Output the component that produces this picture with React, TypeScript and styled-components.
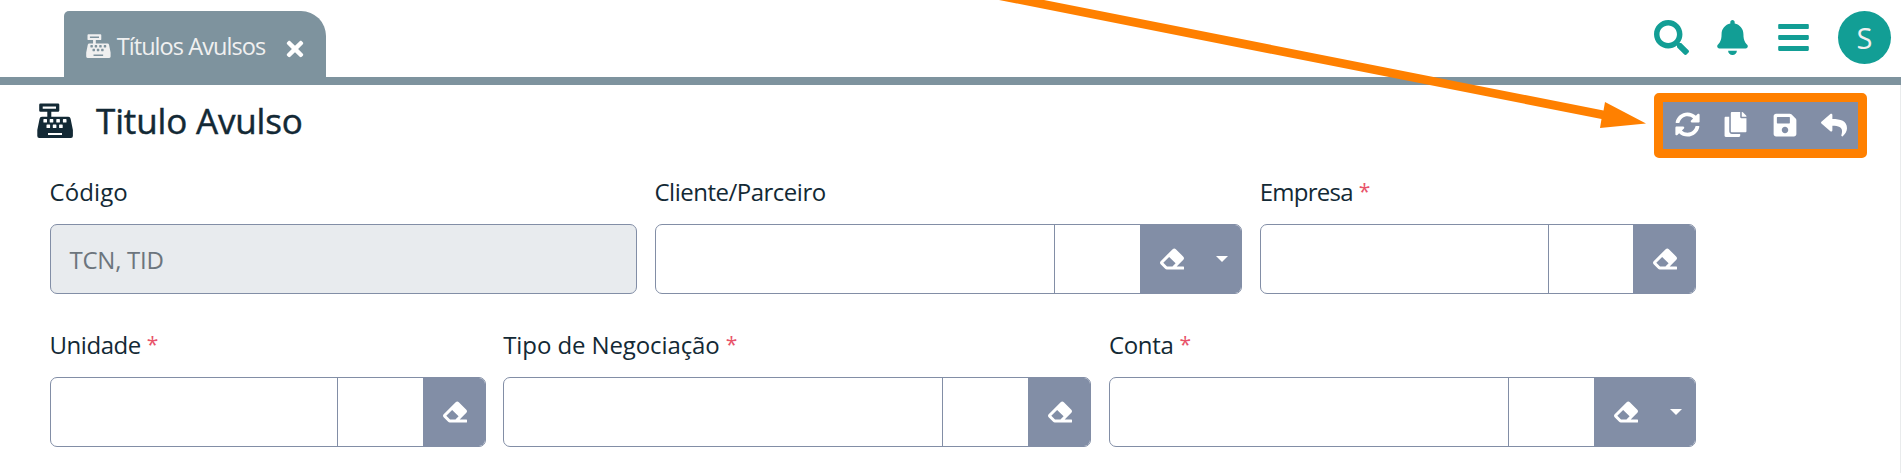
import React from 'react';
import styled, { createGlobalStyle } from 'styled-components';
import {
  FaBars,
  FaBell,
  FaCopy,
  FaEraser,
  FaReply,
  FaSave,
  FaSearch,
  FaSyncAlt,
  FaTimes,
} from 'react-icons/fa';

const GlobalStyle = createGlobalStyle`
  * { box-sizing: border-box; }
  body {
    margin: 0;
    background: #fff;
    overflow: hidden;
    font-family: 'Open Sans', 'Noto Sans', sans-serif;
    color: #132935;
  }
  svg { display: block; flex: none; }
`;

const Page = styled.div`
  position: relative;
  height: 473px;
  display: flex;
  flex-direction: column;
`;

const TopBar = styled.header`
  height: 85px;
  flex: none;
  display: flex;
  justify-content: space-between;
  padding: 11px 10px 0 64px;
  border-bottom: 8px solid #7e939e;
`;

const Tab = styled.div`
  width: 262px;
  height: 66px;
  display: flex;
  align-items: center;
  padding: 4px 22px 0;
  background: #7e939e;
  border-radius: 5px 25px 0 0;
  color: #f0f0f0;
`;

const TabLabel = styled.span`
  width: 148px;
  margin: 0 18px 0 6px;
  font-size: 23.5px;
  line-height: 32px;
  letter-spacing: -0.93px;
  white-space: nowrap;
`;

const CloseIcon = styled(FaTimes)`
  margin-top: 5px;
  color: #fff;
`;

const TopActions = styled.nav`
  display: flex;
  align-items: center;
  height: 53px;
  color: #129e95;
`;

const TopIcon = styled.span<{ $gap: number }>`
  display: flex;
  margin-right: ${({ $gap }) => $gap}px;
`;

const Avatar = styled.span`
  width: 53px;
  height: 53px;
  display: flex;
  align-items: center;
  justify-content: center;
  border-radius: 50%;
  background: #129e95;
  color: #f0f0f0;
  font-size: 29px;
  line-height: 40px;
`;

const Content = styled.main`
  flex: 1;
  border-right: 1px solid #e9ebec;
`;

const Heading = styled.div`
  display: flex;
  justify-content: space-between;
  height: 87px;
  padding: 8px 33px 0 37px;
`;

const TitleGroup = styled.div`
  display: flex;
  gap: 23px;
  padding-top: 10px;
`;

const Title = styled.h1`
  margin: -6px 0 0;
  font-size: 35px;
  line-height: 48px;
  font-weight: 400;
  -webkit-text-stroke: 0.45px currentColor;
  letter-spacing: -0.15px;
  white-space: nowrap;
`;

const Toolbar = styled.div`
  width: 213px;
  height: 65px;
  display: flex;
  align-items: center;
  justify-content: space-between;
  padding: 0 11px 2px 12px;
  border: 9px solid #ff8000;
  border-radius: 5px;
  background: #828ea6;
  color: #fff;
`;

const FormRow = styled.div`
  display: flex;
  gap: 17.75px;
  height: 153px;
  padding-left: 49.5px;
`;

const Field = styled.div<{ $width: number }>`
  width: ${({ $width }) => $width}px;
  flex: none;
`;

const Label = styled.label`
  display: flex;
  height: 52px;
  padding-top: 3px;
  font-size: 24px;
  line-height: 33px;
  white-space: nowrap;
`;

const LabelText = styled.span<{ $spacing: number }>`
  letter-spacing: ${({ $spacing }) => $spacing}px;
`;

const Required = styled.span`
  margin-left: 6px;
  font-size: 21px;
  color: #e8536a;
`;

const Control = styled.div<{ $disabled?: boolean }>`
  display: flex;
  align-items: center;
  height: 70px;
  overflow: hidden;
  border: 1px solid #828ea6;
  border-radius: 7px;
  background: ${({ $disabled }) => ($disabled ? '#e8ebee' : '#fff')};
`;

const Placeholder = styled.span`
  padding-left: 19px;
  font-size: 24px;
  letter-spacing: -0.25px;
  color: #6c757d;
`;

const MainInput = styled.div`
  flex: 1;
  height: 100%;
`;

const CodeInput = styled.div<{ $width: number }>`
  width: ${({ $width }) => $width}px;
  height: 100%;
  border-left: 1px solid #828ea6;
`;

const Buttons = styled.div<{ $menu?: boolean }>`
  width: ${({ $menu }) => ($menu ? 101 : 62)}px;
  height: 100%;
  display: flex;
  align-items: center;
  gap: 32px;
  padding-left: 20px;
  background: #828ea6;
  color: #fff;
`;

const Caret = styled.span`
  border: 6px solid transparent;
  border-top-color: #fff;
  border-bottom: 0;
`;

const ArrowOverlay = styled.svg`
  position: absolute;
  inset: 0;
`;

/* Cash register: display on a neck, two rows of keys and a drawer slot. */
const RegisterIcon = ({ size }: { size: number }) => (
  <svg width={(size * 36) / 35} height={size} viewBox="0 0 36 35" fill="currentColor" fillRule="evenodd">
    <path d="M3.500 0.500h17.500q1.300 0 1.300 1.300v5.700q0 1.300-1.300 1.300h-6.700v4.900h17q2 0 2.300 2l2.300 11.300v6q0 2-2 2h-31.600q-2 0-2-2v-6l2.300-11.300q.3-2 2.300-2h5.400v-4.900h-6.800q-1.300 0-1.300-1.300v-5.700q0-1.300 1.300-1.300zM5.700 3.600v2.200h13.300v-2.200zM7 16h2.400q.6 0 .6.600v2.400q0 .6-.6.600h-2.400q-.6 0-.6-.6v-2.400q0-.6.600-.6zM13.300 16h2.400q.6 0 .6.600v2.400q0 .6-.6.600h-2.400q-.6 0-.6-.6v-2.400q0-.6.600-.6zM19.900 16h2.400q.6 0 .6.600v2.400q0 .6-.6.600h-2.400q-.6 0-.6-.6v-2.400q0-.6.600-.6zM26.500 16h2.400q.6 0 .6.600v2.400q0 .6-.6.600h-2.400q-.6 0-.6-.6v-2.400q0-.6.600-.6zM10.100 21.500h2.400q.6 0 .6.600v2.400q0 .6-.6.600h-2.400q-.6 0-.6-.6v-2.400q0-.6.600-.6zM16.400 21.500h2.400q.6 0 .6.600v2.400q0 .6-.6.600h-2.400q-.6 0-.6-.6v-2.400q0-.6.600-.6zM22.700 21.500h2.400q.6 0 .6.600v2.400q0 .6-.6.600h-2.400q-.6 0-.6-.6v-2.400q0-.6.600-.6zM11 30v2h14v-2z" />
  </svg>
);

interface FieldData {
  label: string;
  width: number;
  spacing: number;
  required?: boolean;
  placeholder?: string;
  menu?: boolean;
  codeWidth?: number;
}

const rows: FieldData[][] = [
  [
    { label: 'Código', width: 587.25, spacing: 0.1, placeholder: 'TCN, TID' },
    { label: 'Cliente/Parceiro', width: 587.5, spacing: -0.5, menu: true },
    { label: 'Empresa', width: 436.25, spacing: -0.75, required: true, codeWidth: 85 },
  ],
  [
    { label: 'Unidade', width: 436, spacing: -0.45, required: true },
    { label: 'Tipo de Negociação', width: 588, spacing: -0.1, required: true },
    { label: 'Conta', width: 587, spacing: -0.35, required: true, menu: true },
  ],
];

const FormField = ({
  label,
  width,
  spacing,
  required,
  placeholder,
  menu,
  codeWidth = 86,
}: FieldData) => (
  <Field $width={width}>
    <Label>
      <LabelText $spacing={spacing}>{label}</LabelText>
      {required && <Required>*</Required>}
    </Label>
    {placeholder ? (
      <Control $disabled>
        <Placeholder>{placeholder}</Placeholder>
      </Control>
    ) : (
      <Control>
        <MainInput />
        <CodeInput $width={codeWidth} />
        <Buttons $menu={menu}>
          <FaEraser size={24} />
          {menu && <Caret />}
        </Buttons>
      </Control>
    )}
  </Field>
);

export default function App() {
  return (
    <Page>
      <GlobalStyle />
      <TopBar>
        <Tab>
          <RegisterIcon size={24} />
          <TabLabel>Títulos Avulsos</TabLabel>
          <CloseIcon size={24} />
        </Tab>
        <TopActions>
          <TopIcon $gap={26}><FaSearch size={35} /></TopIcon>
          <TopIcon $gap={26}><FaBell size={35} /></TopIcon>
          <TopIcon $gap={27}><FaBars size={35} /></TopIcon>
          <Avatar>S</Avatar>
        </TopActions>
      </TopBar>
      <Content>
        <Heading>
          <TitleGroup>
            <RegisterIcon size={35} />
            <Title>Titulo Avulso</Title>
          </TitleGroup>
          <Toolbar>
            <FaSyncAlt size={25} />
            <FaCopy size={25} />
            <FaSave size={26} />
            <FaReply size={26} />
          </Toolbar>
        </Heading>
        {rows.map((fields, index) => (
          <FormRow key={index}>
            {fields.map((field) => (
              <FormField key={field.label} {...field} />
            ))}
          </FormRow>
        ))}
      </Content>
      <ArrowOverlay width="1700" height="170" viewBox="0 0 1700 170">
        <path d="M999 0H1044L1603.500 110.500L1605 102L1646 123.500L1600 128L1601.500 119Z" fill="#ff8000" />
      </ArrowOverlay>
    </Page>
  );
}
